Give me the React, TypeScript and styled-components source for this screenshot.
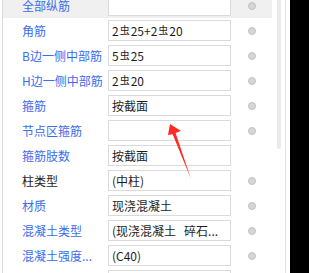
import React from 'react';
import styled, { createGlobalStyle } from 'styled-components';

const GlobalStyle = createGlobalStyle`
  html, body {
    margin: 0;
    padding: 0;
    background: #ffffff;
  }
  body {
    font-family: "Noto Sans CJK SC", "Noto Sans", sans-serif;
    font-size: 12px;
  }
`;

const Page = styled.div`
  display: flex;
  width: 309px;
  height: 273px;
  overflow: hidden;
  position: relative;
`;

const Panel = styled.div`
  display: flex;
  width: 290px;
  height: 100%;
  padding-left: 2px;
  box-sizing: border-box;
  background: #ffffff;
`;

const List = styled.div`
  width: 270px;
  height: 100%;
  border-left: 1px solid #dadada;
  box-sizing: border-box;
  overflow: hidden;
`;

const Rows = styled.div`
  margin-top: -7px;
`;

const Row = styled.div<{ $shaded?: boolean }>`
  display: grid;
  grid-template-columns: 105px 123px 41px;
  align-items: center;
  height: 25px;
  background: ${({ $shaded }) => ($shaded ? '#f0f0f0' : 'transparent')};
`;

const Label = styled.div<{ $plain?: boolean }>`
  padding-left: 19px;
  color: ${({ $plain }) => ($plain ? '#1e1e1e' : '#3a6cef')};
  white-space: nowrap;
  line-height: 25px;
  min-height: 25px;
`;

const Field = styled.div`
  height: 21px;
  box-sizing: border-box;
  border: 1px solid #dadada;
  background: #ffffff;
  padding: 0 3px;
  color: #1e1e1e;
  line-height: 19px;
  white-space: pre;
`;

const Bar = styled.span`
  font-size: 10px;
  position: relative;
  top: -2px;
  margin: 0 1px;
`;

const RadioCell = styled.div`
  display: flex;
  justify-content: center;
`;

const Radio = styled.span`
  width: 8px;
  height: 8px;
  box-sizing: border-box;
  border-radius: 50%;
  background: #d6d6d9;
  border: 1px solid #c2c2c6;
`;

const ScrollTrack = styled.div`
  width: 4px;
  margin-left: 5px;
  height: 100%;
`;

const Thumb = styled.div`
  width: 4px;
  height: 149px;
  background: #eaeaea;
  border-radius: 0 0 2px 2px;
`;

const Edge = styled.div`
  width: 1px;
  height: 100%;
  margin-left: 4px;
  background: #e3e3e3;
`;

const Outside = styled.div`
  flex: 1;
  background: #000000;
`;

const Arrow = styled.svg`
  position: absolute;
  left: 0;
  top: 0;
  pointer-events: none;
`;

type Item = {
  label: string;
  value?: React.ReactNode;
  radio?: boolean;
  plain?: boolean;
  shaded?: boolean;
};

const rebar = (...parts: string[]) =>
  parts.map((p, i) => (
    <React.Fragment key={i}>
      {i > 0 && <Bar>虫</Bar>}
      {p}
    </React.Fragment>
  ));

const items: Item[] = [
  { label: '全部纵筋', radio: true, shaded: true },
  { label: '角筋', value: rebar('2', '25+2', '20'), radio: true },
  { label: 'B边一侧中部筋', value: rebar('5', '25'), radio: true },
  { label: 'H边一侧中部筋', value: rebar('2', '20'), radio: true },
  { label: '箍筋', value: '按截面', radio: true },
  { label: '节点区箍筋', radio: true },
  { label: '箍筋肢数', value: '按截面' },
  { label: '柱类型', value: '(中柱)', radio: true, plain: true },
  { label: '材质', value: '现浇混凝土', radio: true },
  { label: '混凝土类型', value: '(现浇混凝土   碎石...', radio: true },
  { label: '混凝土强度...', value: '(C40)', radio: true },
  { label: '', radio: true },
];

export default function App() {
  return (
    <>
      <GlobalStyle />
      <Page>
        <Panel>
          <List>
            <Rows>
              {items.map((it, i) => (
                <Row key={i} $shaded={it.shaded}>
                  <Label $plain={it.plain}>{it.label}</Label>
                  <Field>{it.value}</Field>
                  <RadioCell>{it.radio && <Radio />}</RadioCell>
                </Row>
              ))}
            </Rows>
          </List>
          <ScrollTrack>
            <Thumb />
          </ScrollTrack>
          <Edge />
        </Panel>
        <Outside />
        <Arrow width="309" height="273" viewBox="0 0 309 273">
          <polygon
            points="170,124 181,131 175.6,133 191,179 172.6,134.2 168,135"
            fill="#ff2a22"
          />
        </Arrow>
      </Page>
    </>
  );
}
